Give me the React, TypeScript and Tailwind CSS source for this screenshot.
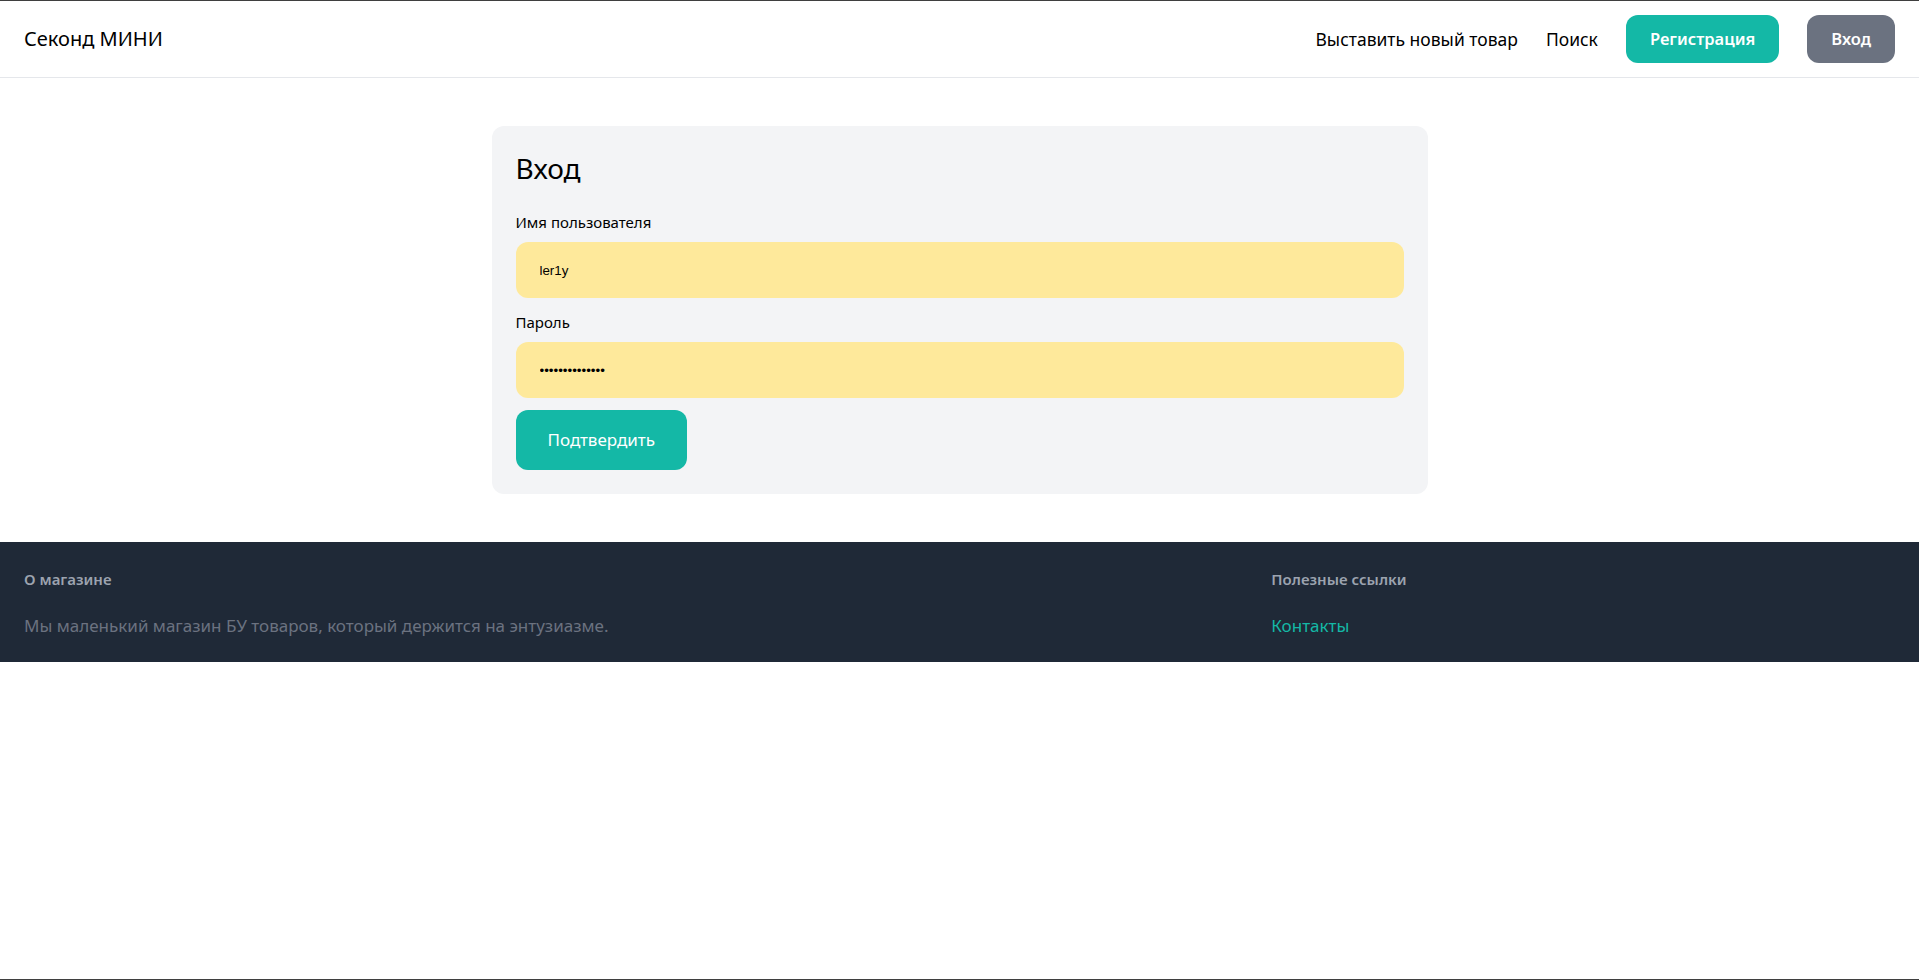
import { useState } from "react";

const font = "font-['Noto_Sans',sans-serif]";

export default function App() {
  const [username, setUsername] = useState("ler1y");
  const [password, setPassword] = useState("qwerty12345678");

  return (
    <div className={`min-h-screen flex flex-col bg-white border-y border-[#3f3f3f] text-black ${font}`}>
      {/* Header */}
      <header className="flex items-center justify-between px-6 py-3.5 border-b border-[#e5e7eb]">
        <a href="#" className="text-xl">Секонд МИНИ</a>
        <nav className="flex items-center gap-7 text-[17.5px]">
          <a href="#">Выставить новый товар</a>
          <a href="#">Поиск</a>
          <button className="h-12 px-6 rounded-xl bg-[#14b8a6] text-white font-semibold text-[16.5px]">Регистрация</button>
          <button className="h-12 px-6 rounded-xl bg-[#6b7280] text-white font-semibold text-[16.5px]">Вход</button>
        </nav>
      </header>

      {/* Login form */}
      <main className="py-12">
        <form
          onSubmit={(e) => e.preventDefault()}
          className="mx-auto w-[936px] p-6 rounded-xl bg-[#f3f4f6] flex flex-col"
        >
          <h1 className="text-[28px] leading-9 mb-6">Вход</h1>
          <label className="text-[15px] leading-6 mb-2">Имя пользователя</label>
          <input
            value={username}
            onChange={(e) => setUsername(e.target.value)}
            className="h-14 px-6 rounded-xl bg-[#fee99b] outline-none font-['Liberation_Sans',Arial,sans-serif] text-[13.33px]"
          />
          <label className="text-[15px] leading-6 mt-3 mb-2">Пароль</label>
          <input
            type="password"
            value={password}
            onChange={(e) => setPassword(e.target.value)}
            className="h-14 px-6 rounded-xl bg-[#fee99b] outline-none font-['Liberation_Sans',Arial,sans-serif] text-[13.33px]"
          />
          <div className="mt-3">
            <button type="submit" className="px-8 py-4 rounded-xl bg-[#14b8a6] text-white text-[17px] leading-7">
              Подтвердить
            </button>
          </div>
        </form>
      </main>

      {/* Footer */}
      <footer className="bg-[#1f2937] px-6 pt-[25px] pb-6 grid grid-cols-3">
        <div className="col-span-2">
          <h3 className="text-[15px] leading-6 font-semibold text-[#9ca3af] mb-[23px]">О магазине</h3>
          <p className="text-[17px] leading-6 text-[#6b7280]">Мы маленький магазин БУ товаров, который держится на энтузиазме.</p>
        </div>
        <div>
          <h3 className="text-[15px] leading-6 font-semibold text-[#9ca3af] mb-[23px]">Полезные ссылки</h3>
          <a href="#" className="block text-[17px] leading-6 text-[#14b8a6]">Контакты</a>
        </div>
      </footer>
    </div>
  );
}
